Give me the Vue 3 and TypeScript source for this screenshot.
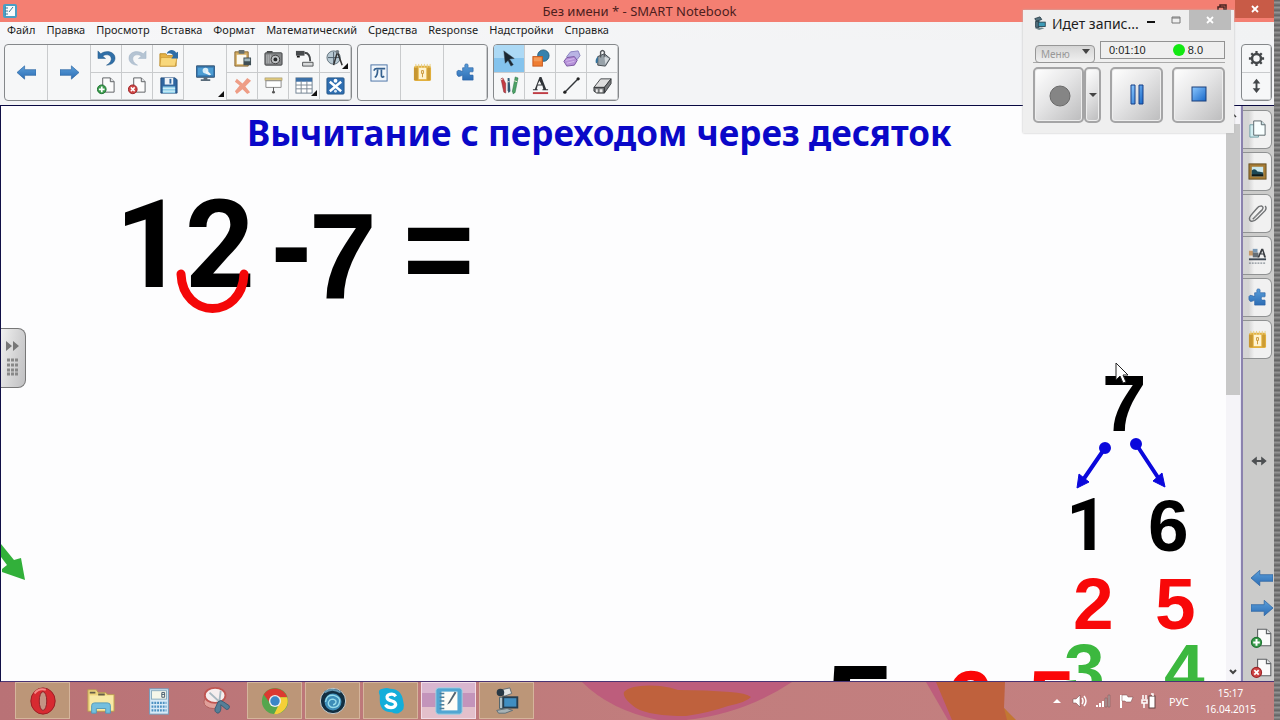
<script setup lang="ts">
interface Tool { name: string; icon: string; more?: boolean; on?: boolean }
interface Mark { text: string; x: number; y: number; size: number; color: string; plain?: boolean }

const doc = '<path d="M6 2h8l4 4v11H6z" fill="#fbfbfb" stroke="#5d6063"/><path d="M14 2v4h4" fill="#e4e8ea" stroke="#5d6063"/>'
const puzzle = '<path d="M1 9q1-2 3-1l3 1V5h2c1-1-1-4 2-4s1 3 2 4h5v4c-1 1-4-1-4 2s3 1 4 2v5H7v-5l-3 1q-2 1-3-2z" fill="url(#blue)" stroke="#2a62a4" stroke-width=".7"/>'
const book = '<rect x="1" y="3" width="18" height="16" rx="2" fill="#e2b03e"/><path d="M3 1v4M6 1v4M9 1v4M12 1v4M15 1v4M18 1v4" stroke="#e8cf83"/><rect x="1" y="5" width="4" height="13" fill="#c79631"/><rect x="15" y="5" width="3" height="13" fill="#cc9c34"/><rect x="6" y="5" width="8" height="12" fill="#fff3cf"/><path d="M9 8h2v3H9zM10 11v4" stroke="#c9973a" fill="none"/>'
const plus = '<circle cx="5" cy="14" r="4.6" fill="#3b9c4d" stroke="#207433"/><path d="M5 11v6M2 14h6" stroke="#fff" stroke-width="1.8"/>'
const cross = '<circle cx="5" cy="14" r="4.6" fill="#cf4645" stroke="#9c2528"/><path d="M3 12l4 4M7 12l-4 4" stroke="#fff" stroke-width="1.6"/>'

const icons: Record<string, string> = {
  left: '<path d="M0 10l8-7v4h12v6H8v4z" fill="url(#blue)" stroke="#2d66a3" stroke-width=".7"/>',
  right: '<path d="M20 10l-8-7v4H0v6h12v4z" fill="url(#blue)" stroke="#2d66a3" stroke-width=".7"/>',
  undo: '<path d="M1 2v8h8L6 7.500c4-3 9.500-1 9 3.500-.5 3-3 5-5 6 5 0 9-3 9-7.500C19 3 10 .500 4 5z" fill="#2f6fa8" stroke="#235681" stroke-width=".5"/>',
  redo: '<path d="M19 2v8h-8l3-2.500c-4-3-9.500-1-9 3.500 .5 3 3 5 5 6-5 0-9-3-9-7.500C1 3 10 .500 16 5z" fill="#b5c4d3" stroke="#9fb2c5" stroke-width=".5"/>',
  open: '<path d="M1 5h6l2 2h9v11H1z" fill="#e6b347" stroke="#bb8a27"/><path d="M2 9h17l-2 9H1z" fill="#f8d77b" stroke="#c89634" stroke-width=".7"/><path d="M8 5c2-5 8-5 10-1l2-1v7h-7l2-3c-2-3-5-3-7-2z" fill="#2e6da6"/>',
  save: '<path d="M2 2h15l2 2v14H2z" fill="#2f66a0" stroke="#234d7d"/><rect x="6" y="2" width="9" height="7" fill="#eef3f8"/><rect x="11" y="3" width="2" height="5" fill="#2f66a0"/><rect x="4" y="11" width="13" height="7" fill="#8fd0ea"/><path d="M4 13h13M4 16h13" stroke="#dff4fb"/>',
  addpage: doc + plus,
  delpage: doc + cross,
  screen: '<rect x="0" y="3" width="20" height="12" rx="1" fill="#3779b1" stroke="#35506c"/><path d="M2 5h16v8H2z" fill="#4d9dd3"/><circle cx="10" cy="8" r="3" fill="#d7edf8"/><path d="M11 7l5 5-2 1-4-2z" fill="#eef4f8"/><path d="M8 15h4v2h3v2H5v-2h3z" fill="#596b7a"/>',
  paste: '<path d="M2 3h14v15H2z" fill="#d4ad62" stroke="#876731"/><path d="M4 6h10v10H4z" fill="#fbf9f0"/><path d="M6 1h6v4H6z" fill="#66706f"/><path d="M11 9h8v8h-8z" fill="#3f4e55"/><path d="M12 10h6v3h-6z" fill="#9fb6bd"/>',
  camera: '<rect x="1" y="4" width="18" height="13" rx="1" fill="#858789" stroke="#3e4042"/><path d="M3 6v9M5 6v9M7 6v9" stroke="#b7b9ba"/><circle cx="12" cy="11" r="4.500" fill="#c1c4c6" stroke="#3c3c3c"/><circle cx="12" cy="11" r="2" fill="#27292a"/><path d="M3 2h6v2H3z" fill="#484a4b"/>',
  doccam: '<rect x="1" y="2" width="9" height="5" fill="#484b4e"/><path d="M2 7h3v2H2z" fill="#111"/><path d="M10 4c4 0 6 3 6 9" fill="none" stroke="#45484b" stroke-width="2"/><path d="M8 14h11v4H8z" fill="#d8dadb" stroke="#525456"/>',
  measure: '<circle cx="8" cy="9" r="7" fill="#b7c8d2" stroke="#64747e"/><path d="M8 3v12M2 9h12" stroke="#4e5e69"/><path d="M12 3l-4 14M12 3l5 14" stroke="#333" stroke-width="1.6"/><circle cx="12" cy="3" r="2" fill="#717b82"/>',
  remove: '<path d="M4 3l6 5 5-6 4 3-6 6 5 6-3 2-5-5-6 5-2-3 5-6-5-4z" fill="#ee9d86"/>',
  shade: '<rect x="1" y="2" width="18" height="3" fill="#ddc77d" stroke="#8d835f" stroke-width=".5"/><path d="M2 5h16v7H2z" fill="#fff" stroke="#888"/><path d="M10 12v5" stroke="#555"/><circle cx="10" cy="17" r="1.500" fill="#555"/>',
  table: '<rect x="1" y="2" width="17" height="16" fill="#fff" stroke="#6f8192"/><rect x="1" y="2" width="17" height="4" fill="#3c70a7"/><path d="M1 9.500h17M1 13.500h17M6.500 5v13M12.500 5v13" stroke="#7b8895"/>',
  exchange: '<rect x="1" y="2" width="18" height="17" rx="1" fill="#2f6eb1" stroke="#265788"/><path d="M4 6l12 10M16 6L4 16" stroke="#fff" stroke-width="2.600"/><circle cx="10" cy="5" r="2" fill="#fff"/><circle cx="10" cy="16" r="1.500" fill="#d5e7f5"/>',
  math: '<rect x="1" y="2" width="17" height="17" fill="#f1f6fb" stroke="#4972a5"/><path d="M4 8q1-2 3-2h9M8 7q0 7-3 8M12 7v6q0 3 3 1" fill="none" stroke="#35618f" stroke-width="1.800"/>',
  book, puzzle,
  select: '<path d="M4 2l11 8-5 .500 4 6-2.500 1.500-3-6-3 3z" fill="#1b2731" stroke="#38434c" stroke-width=".5"/>',
  shapes: '<circle cx="13" cy="7" r="6" fill="#3782ad" stroke="#28617f"/><rect x="2" y="8" width="10" height="10" fill="#ef7d32" stroke="#c65b20"/><path d="M3 9h8v4H3z" fill="#f39b59"/>',
  poly: '<path d="M9 3l8-1 2 5-3 4-8 1-3-4z" fill="#b9b4e4" stroke="#8a82c0"/><path d="M5 9l8-1 3 4-3 5-8 1-3-5z" fill="#b691d9" stroke="#77559f"/><path d="M4 12l9-2M5 15l8-2" stroke="#d4bbec"/>',
  fill: '<path d="M5 8l7-3 6 5-5 8-8-1z" fill="#98a2a9" stroke="#42494e"/><path d="M8 9V3q2-3 4 0v6" fill="none" stroke="#53585c" stroke-width="1.500"/><path d="M12 8l5 2-4 6z" fill="#d5dadd"/><path d="M5 8q-3 3-2 7 3 1 2-7" fill="#35739d"/>',
  pens: '<path d="M1 3l3 14 2 1V8L3 2z" fill="#c53c43" stroke="#7a2730" stroke-width=".5"/><path d="M8 2h2l1 14-2 2-1-3z" fill="#315a74"/><path d="M16 1l3 1-3 15-2 2-1-3z" fill="#4da366" stroke="#246b40" stroke-width=".5"/><path d="M1 4l2-1M8 6h2M15 5l3 1" stroke="#f4e9d9"/>',
  text: '<path d="M9 1h2l5 13h2v1h-6v-1h1l-1-4H7l-1 4h1v1H2v-1h2zM9 5L7 9h4z" fill="#303439" fill-rule="evenodd"/><rect x="2" y="17" width="16" height="2" fill="#bf3d45"/>',
  line: '<path d="M3 17L17 3" stroke="#32363a" stroke-width="1.500"/><circle cx="3" cy="17" r="1.700" fill="#222"/><circle cx="17" cy="3" r="1.700" fill="#222"/>',
  rubber: '<path d="M8 3h11l-7 9H1z" fill="#dedede" stroke="#44484b"/><path d="M1 12h11v6H4l-3-2zM12 12l7-9v5l-7 10z" fill="#77797b" stroke="#393c3e"/><path d="M3 14h2v3H3zM7 14h3v3H7z" fill="#ededed"/>',
  gear: '<circle cx="10" cy="10" r="4.700" fill="none" stroke="#44474a" stroke-width="2.600"/><path d="M10 2v3M10 15v3M2 10h3M15 10h3M4.500 4.500l2 2M13.500 13.500l2 2M15.500 4.500l-2 2M6.500 13.500l-2 2" stroke="#44474a" stroke-width="2.400"/>',
  updown: '<path d="M10 3l4 5h-3v5h3l-4 5-4-5h3V8H6z" fill="#44474a"/>',
  wide: '<path d="M3 10l5-4v3h4V6l5 4-5 4v-3H8v3z" fill="#4d5052"/>',
  pages: '<path d="M2 5h9v13H2z" fill="#d1edf0" stroke="#6f9ca3"/><path d="M6 1h8l4 4v11H6z" fill="#f8ffff" stroke="#59666a"/><path d="M14 1v4h4" fill="#cce3e7" stroke="#59666a"/>',
  gallery: '<rect x="1" y="2" width="18" height="16" fill="#a67b34" stroke="#675023"/><path d="M4 5h12v10H4z" fill="#cbe8ee"/><path d="M4 9q3-3 6 1 2 0 6 1v4H4z" fill="#1d4855"/><path d="M4 14h12" stroke="#121a18" stroke-width="2"/>',
  clip: '<path d="M5 16L15 6q2-3-1-4-3 0-5 3l-6 7q-3 4 0 6 3 1 7-3l8-8q2-3 0-5" fill="none" stroke="#707274" stroke-width="1.500"/><path d="M7 14l7-8" stroke="#909294"/>',
  props: '<rect x="1" y="5" width="5" height="5" fill="#c69a6b"/><rect x="5" y="3" width="5" height="4" fill="#7797b4"/><rect x="5" y="7" width="6" height="5" fill="#656e75"/><path d="M10 12L14 3h2l3 9h-2l-1-3h-3l-1 3zM15 5l-1 3h2z" fill="#393d42" fill-rule="evenodd"/><path d="M1 14h18" stroke="#3c4753" stroke-width="2"/><path d="M1 18h18" stroke="#66717a" stroke-dasharray="2 1"/>'
}

const menus = ['Файл', 'Правка', 'Просмотр', 'Вставка', 'Формат', 'Математический', 'Средства', 'Response', 'Надстройки', 'Справка']
const nav: Tool[] = [{ name: 'Назад', icon: 'left' }, { name: 'Вперед', icon: 'right' }]
const fileTools: Tool[] = [
  { name: 'Отменить', icon: 'undo' }, { name: 'Повторить', icon: 'redo' }, { name: 'Открыть', icon: 'open' },
  { name: 'Добавить страницу', icon: 'addpage' }, { name: 'Удалить страницу', icon: 'delpage' }, { name: 'Сохранить', icon: 'save' }
]
const insertTools: Tool[] = [
  { name: 'Вставить', icon: 'paste' }, { name: 'Захват экрана', icon: 'camera' }, { name: 'Документ-камера', icon: 'doccam' }, { name: 'Измерения', icon: 'measure', more: true },
  { name: 'Удалить', icon: 'remove' }, { name: 'Затенение экрана', icon: 'shade' }, { name: 'Таблица', icon: 'table', more: true }, { name: 'SMART Exchange', icon: 'exchange' }
]
const addons: Tool[] = [{ name: 'Математика', icon: 'math' }, { name: 'Галерея занятий', icon: 'book' }, { name: 'Дополнения', icon: 'puzzle' }]
const drawTools: Tool[] = [
  { name: 'Выбрать', icon: 'select', on: true }, { name: 'Фигуры', icon: 'shapes' }, { name: 'Многоугольники', icon: 'poly' }, { name: 'Заливка', icon: 'fill' },
  { name: 'Перья', icon: 'pens' }, { name: 'Текст', icon: 'text' }, { name: 'Линии', icon: 'line' }, { name: 'Ластик', icon: 'rubber' }
]
const tabs: Tool[] = [
  { name: 'Страницы', icon: 'pages' }, { name: 'Галерея', icon: 'gallery' }, { name: 'Вложения', icon: 'clip' },
  { name: 'Свойства', icon: 'props' }, { name: 'Надстройки', icon: 'puzzle' }, { name: 'Занятия', icon: 'book' }
]
const pageTools: Tool[] = [
  { name: 'Предыдущая страница', icon: 'left' }, { name: 'Следующая страница', icon: 'right' },
  { name: 'Новая страница', icon: 'addpage' }, { name: 'Убрать страницу', icon: 'delpage' }
]

const marks: Mark[] = [
  { text: '12', x: 114, y: 79, size: 122, color: '#000', plain: true },
  { text: '-', x: 270, y: 78, size: 122, color: '#000' },
  { text: '7', x: 308, y: 90, size: 122, color: '#000' },
  { text: '=', x: 402, y: 82, size: 122, color: '#000' },
  { text: '7', x: 1101, y: 258, size: 80, color: '#000' },
  { text: '1', x: 1065, y: 383, size: 73, color: '#000', plain: true },
  { text: '6', x: 1147, y: 383, size: 73, color: '#000' },
  { text: '2', x: 1072, y: 461, size: 73, color: '#f80809' },
  { text: '5', x: 1154, y: 461, size: 73, color: '#f80809' },
  { text: '3', x: 1063, y: 527, size: 73, color: '#3cb83f' },
  { text: '4', x: 1163, y: 527, size: 73, color: '#3cb83f' },
  { text: '5', x: 824, y: 541, size: 126, color: '#000' },
  { text: '6', x: 945, y: 552, size: 85, color: '#fb0607' },
  { text: '5', x: 1027, y: 552, size: 85, color: '#fb0607' }
]

const apps = [
  { name: 'Opera', open: true, art: '<ellipse cx="16" cy="16" rx="13" ry="14" fill="#d72a31" stroke="#971b23"/><ellipse cx="16" cy="16" rx="4" ry="10" fill="#c39484" stroke="#8e2026"/><path d="M7 8q4-6 12-4" stroke="#f48b88" fill="none" stroke-width="2"/>' },
  { name: 'Проводник', open: false, art: '<path d="M2 4h9l2 3h8l2 2h7v18H2z" fill="#eed47c" stroke="#b99b55"/><path d="M4 10h25v16H4z" fill="#f8e9a6"/><path d="M4 7h6M13 9h7" stroke="#665d48" stroke-width="2"/><path d="M6 29V21q0-3 3-3h14q3 0 3 3v8h-5v-5H11v5z" fill="#74bfdf" stroke="#5299ba"/>' },
  { name: 'Калькулятор', open: false, art: '<rect x="6" y="3" width="20" height="27" fill="#d8eaf7" stroke="#6e9cbd"/><rect x="8" y="5" width="16" height="9" fill="#f6f7ea" stroke="#87a9bd"/><path d="M19 7h3v5h-3zM19 9h3" stroke="#42596c" fill="none"/><path d="M8 18h16M8 22h16M8 26h16" stroke="#4c90c1" stroke-width="2.500" stroke-dasharray="2 1"/>' },
  { name: 'Ножницы', open: false, art: '<ellipse cx="12" cy="17" rx="10" ry="7" fill="#e0a09a" stroke="#b05f5c"/><ellipse cx="14" cy="10" rx="11" ry="8" fill="#f5eeee" stroke="#bf5652" stroke-width="2"/><path d="M8 7l14 13M20 5l-2 15" stroke="#a8b8c0" stroke-width="2"/><path d="M17 17q3-3 6 0l6 4q1 4-3 4l-6-5q1 8-3 9-4-1-3-5z" fill="#557e97" stroke="#355c74"/>' },
  { name: 'Chrome', open: true, art: '<circle cx="16" cy="16" r="14" fill="#56a64d"/><path d="M4 9a14 14 0 0 1 25 3H16l-4 8z" fill="#dc3931"/><path d="M29 12A14 14 0 0 1 15 30l7-14-5-4z" fill="#f4cf38"/><circle cx="16" cy="16" r="6.500" fill="#eee"/><circle cx="16" cy="16" r="5" fill="#3b86c6"/>' },
  { name: 'Медиаплеер', open: true, art: '<circle cx="16" cy="16" r="13.500" fill="#122f42" stroke="#d1d8d8"/><circle cx="16" cy="17" r="9" fill="#3d8db8"/><path d="M8 17q1-8 9-7 7 2 6 7-1 6-7 6-5-1-5-5 1-4 5-4 4 1 3 4-1 2-3 2" stroke="#97dcea" fill="none" stroke-width="1.500"/><path d="M7 7q8-6 17 0" stroke="#6295af" fill="none" stroke-width="2"/>' },
  { name: 'Skype', open: true, art: '<path d="M4 10Q1 4 7 3q5-2 8 0 12 0 14 13 3 10-5 13-4 1-7-1Q4 28 4 15z" fill="#13aeda"/><path d="M21 11q-2-3-6-2-4 1-3 4 1 2 5 3 4 1 4 4-1 3-5 3t-6-3" fill="none" stroke="#fff" stroke-width="3.500"/>' },
  { name: 'SMART Notebook', open: true, art: '<rect x="2" y="2" width="28" height="28" rx="3" fill="#52a6d2" stroke="#a2d1e2"/><rect x="8" y="6" width="17" height="20" fill="#fffdf7"/><path d="M6 8h5M6 12h5M6 16h5M6 20h5M6 24h5" stroke="#4f7f9a" stroke-width="1.500"/><path d="M15 18L22 6l2 1-7 11-3 2z" fill="#526471"/>' },
  { name: 'Запись', open: true, art: '<path d="M10 4l9-2 2 6-8 3z" fill="#e1e4e4" stroke="#606b70"/><circle cx="9" cy="7" r="4" fill="#273845"/><path d="M8 12h4v12H8z" fill="#b1c1c8" stroke="#4e626b"/><rect x="12" y="12" width="15" height="11" fill="#408ec1" stroke="#263d4e" stroke-width="2"/><path d="M5 26l11-2 6 2-8 3H7z" fill="#a7b2b5" stroke="#5d6e76"/>' }
]
</script>

<template>
  <div class="desktop">
    <main class="window">
      <header class="titlebar">
        <svg class="appicon" viewBox="0 0 16 16"><rect x="1" y="1" width="14" height="14" rx="2" fill="#4a9fc4"/><rect x="4" y="3" width="9" height="10" fill="#f7fbfc"/><path d="M3 5h3M3 8h3M3 11h3M7 9l4-5" stroke="#3d7995"/></svg>
        <span class="caption">Без имени * - SMART Notebook</span>
        <button class="restore" aria-label="Развернуть"><svg viewBox="0 0 10 10"><path d="M3 3V1h6v5H7M1 3h6v5H1z" fill="none" stroke="#482421" stroke-width="1.500"/></svg></button>
        <button class="close" aria-label="Закрыть"><svg viewBox="0 0 10 10"><path d="M2 2l6 6M8 2L2 8" stroke="#fff" stroke-width="1.800"/></svg></button>
      </header>
      <nav class="menubar"><button v-for="m in menus" :key="m">{{ m }}</button></nav>

      <div class="toolbar">
        <div class="group">
          <button v-for="t in nav" :key="t.name" class="tool big" :aria-label="t.name"><svg viewBox="0 0 20 20" v-html="icons[t.icon]" /></button>
          <div class="cells three"><button v-for="t in fileTools" :key="t.name" class="tool" :aria-label="t.name"><svg viewBox="0 0 20 20" v-html="icons[t.icon]" /></button></div>
          <button class="tool big more" aria-label="Просмотр экранов"><svg viewBox="0 0 20 20" v-html="icons.screen" /></button>
          <div class="cells four"><button v-for="t in insertTools" :key="t.name" class="tool" :class="{ more: t.more }" :aria-label="t.name"><svg viewBox="0 0 20 20" v-html="icons[t.icon]" /></button></div>
        </div>
        <div class="group">
          <button v-for="t in addons" :key="t.name" class="tool big" :aria-label="t.name"><svg viewBox="0 0 20 20" v-html="icons[t.icon]" /></button>
        </div>
        <div class="group">
          <div class="cells four"><button v-for="t in drawTools" :key="t.name" class="tool" :class="{ on: t.on }" :aria-label="t.name"><svg viewBox="0 0 20 20" v-html="icons[t.icon]" /></button></div>
        </div>
        <div class="group last">
          <div class="cells one">
            <button class="tool" aria-label="Настройка"><svg viewBox="0 0 20 20" v-html="icons.gear" /></button>
            <button class="tool" aria-label="Переместить панель"><svg viewBox="0 0 20 20" v-html="icons.updown" /></button>
          </div>
        </div>
      </div>

      <div class="work">
        <section class="stage">
          <h1>Вычитание с переходом через десяток</h1>
          <span v-for="(m, i) in marks" :key="i" class="mark" :class="{ plain: m.plain }" :style="{ left: m.x + 'px', top: m.y + 'px', fontSize: m.size + 'px', color: m.color }">{{ m.text }}</span>
          <svg class="ink">
            <defs>
              <linearGradient id="blue" x1="0" y1="0" x2="0" y2="1"><stop offset="0" stop-color="#5b9fda"/><stop offset="1" stop-color="#2c6db5"/></linearGradient>
              <linearGradient id="glass" x1="0" y1="0" x2="1" y2="1"><stop offset="0" stop-color="#8cc8ff"/><stop offset="1" stop-color="#1767c8"/></linearGradient>
            </defs>
            <path d="M180 168C182 214 241 214 243 168" fill="none" stroke="#f40708" stroke-width="9" stroke-linecap="round"/>
            <g stroke="#0b08dc" stroke-width="4" fill="#0b08dc">
              <path d="M1104 342l-22 32M1135 338l23 35"/>
              <circle cx="1104" cy="342" r="4"/><circle cx="1135" cy="338" r="4"/>
              <path d="M1076 382l2-14 10 8zM1164 381l-12-6 9-8z" stroke-width="1"/>
            </g>
            <path d="M0 438l13 16 7-2 4 22-23-8v-3l5-4-6-8z" fill="#32b03a"/>
            <path d="M1115 257v17l4-4 3 7 3-1-3-7h5z" fill="#fff" stroke="#222"/>
          </svg>
          <button class="drawer" aria-label="Показать панель">
            <svg viewBox="0 0 16 40"><path d="M1 3l6 5-6 5zM8 3l6 5-6 5z" fill="#777"/><path d="M2 22h11M2 27h11M2 32h11M2 36h11" stroke="#888" stroke-width="3" stroke-dasharray="3 1"/></svg>
          </button>
        </section>
        <div class="scroll">
          <button aria-label="Вверх"><svg viewBox="0 0 8 8"><path d="M1 6l3-3 3 3" fill="none" stroke="#333" stroke-width="1.500"/></svg></button>
          <div class="thumb"></div>
          <button class="down" aria-label="Вниз"><svg viewBox="0 0 8 8"><path d="M1 2l3 3 3-3" fill="none" stroke="#444" stroke-width="2"/></svg></button>
        </div>
        <aside class="rail">
          <button v-for="t in tabs" :key="t.name" class="tab" :aria-label="t.name"><svg viewBox="0 0 20 20" v-html="icons[t.icon]" /></button>
          <button class="plain grip" aria-label="Ширина панели"><svg viewBox="0 0 20 20" v-html="icons.wide" /></button>
          <div class="pager"><button v-for="t in pageTools" :key="t.name" class="plain" :aria-label="t.name"><svg viewBox="0 0 20 20" v-html="icons[t.icon]" /></button></div>
        </aside>
      </div>

      <footer class="taskbar">
        <svg class="wall" viewBox="0 0 460 38">
          <path d="M22 0H232Q184 32 126 38H98Q50 28 22 0z" fill="#bd5d7c"/>
          <path d="M64 10Q72 2 100 4q10 1 18 4 28 0 52 2 16 1 21 5-4 5-23 9-20 7-42 10-36 0-50-8-14-10-12-16z" fill="#bf613d"/>
          <path d="M366 0h12l16 38h-6z" fill="#bd5d7c"/><path d="M376 0h69l-1 26 10 12h-62z" fill="#bf613d"/><path d="M444 26l12 12h-9z" fill="#c27732"/>
        </svg>
        <button v-for="a in apps" :key="a.name" class="app" :class="{ open: a.open, active: a.name === 'SMART Notebook' }" :aria-label="a.name"><svg viewBox="0 0 32 32" v-html="a.art" /></button>
        <div class="tray">
          <button aria-label="Скрытые значки"><svg viewBox="0 0 16 16"><path d="M4 10l4-4 4 4z" fill="#fff"/></svg></button>
          <button aria-label="Громкость"><svg viewBox="0 0 16 16"><path d="M1 6h3l4-4v12l-4-4H1z" fill="#fff" stroke="#6e4545" stroke-width=".5"/><path d="M10 5q2 3 0 6M12 3q4 5 0 10" fill="none" stroke="#fff" stroke-width="1.500"/></svg></button>
          <button aria-label="Сеть"><svg viewBox="0 0 16 16"><path d="M1 12h2v2H1zM4 10h2v4H4zM7 8h2v6H7z" fill="#fff"/><path d="M10 5h2v9h-2zM13 2h2v12h-2z" fill="#b39999" stroke="#765b5b" stroke-width=".5"/></svg></button>
          <button aria-label="Центр поддержки"><svg viewBox="0 0 16 16"><path d="M3 2v13" stroke="#fff" stroke-width="2"/><path d="M4 2h5l1 2h5l-2 5H8L7 8H4z" fill="#fff" stroke="#774a4a" stroke-width=".5"/></svg></button>
          <button aria-label="Питание"><svg viewBox="0 0 16 16"><rect x="8" y="3" width="6" height="12" fill="#fff" stroke="#604141"/><path d="M10 1h2v2M2 2v4M5 2v4M1 7h5v3H1zM3 10v5" fill="none" stroke="#fff" stroke-width="1.500"/></svg></button>
          <button class="lang">РУС</button>
          <button class="clock"><span>15:17</span><span>16.04.2015</span></button>
        </div>
      </footer>
    </main>
    <div class="edge"></div>

    <section class="recorder">
      <header>
        <svg class="cam" viewBox="0 0 16 16"><path d="M2 3l6-2 2 3-6 2zM3 6h4v7H3z" fill="#55727f" stroke="#263d48"/><rect x="6" y="7" width="8" height="5" fill="#3d9bb7" stroke="#28434f"/><path d="M2 14l8-1 3 1-6 2z" fill="#71868c"/></svg>
        <h2>Идет запис...</h2>
        <button class="min" aria-label="Свернуть"><svg viewBox="0 0 10 10"><path d="M1 7h8" stroke="#111" stroke-width="2"/></svg></button>
        <button class="max" aria-label="Развернуть окно записи"><svg viewBox="0 0 10 10"><path d="M1 2h8v6H1zM1 3h8" fill="none" stroke="#777"/></svg></button>
        <button class="shut" aria-label="Закрыть запись"><svg viewBox="0 0 10 10"><path d="M2 2l6 6M8 2L2 8" stroke="#fff" stroke-width="1.800"/></svg></button>
      </header>
      <div class="status">
        <div class="pick"><select aria-label="Меню" disabled><option>Меню</option></select><svg viewBox="0 0 8 5"><path d="M0 0h8L4 5z" fill="#444"/></svg></div>
        <output><span>0:01:10</span><i></i><span>8.0</span></output>
      </div>
      <div class="controls">
        <div class="pair">
          <button class="rec" aria-label="Запись" disabled><svg viewBox="0 0 24 24"><circle cx="13" cy="13" r="10" fill="#858585" stroke="#6a6a6a"/></svg></button>
          <button class="drop" aria-label="Параметры записи"><svg viewBox="0 0 8 5"><path d="M0 0h8L4 4z" fill="#444"/></svg></button>
        </div>
        <button aria-label="Пауза"><svg viewBox="0 0 24 24"><path d="M6 2h4v19H6zM14 2h4v19h-4z" fill="url(#glass)" stroke="#173f86"/></svg></button>
        <button aria-label="Стоп"><svg viewBox="0 0 24 24"><rect x="5" y="4" width="14" height="14" fill="url(#glass)" stroke="#1a3f7a"/></svg></button>
      </div>
    </section>
  </div>
</template>

<style>
body { margin: 0; overflow: hidden; }
</style>

<style scoped>
* { box-sizing: border-box; }
button { font: inherit; color: inherit; background: none; border: 0; padding: 0; margin: 0; display: flex; align-items: center; justify-content: center; }
svg { display: block; flex: none; }
.desktop { position: relative; display: flex; height: 100vh; font-family: "Noto Sans", "Open Sans", sans-serif; color: #1d1d1d; }
.window { flex: 1; min-width: 0; display: flex; flex-direction: column; background: #f4f5f6; }
.edge { width: 6px; background: repeating-linear-gradient(#666 0 1px, #929292 2px 3px, #707070 4px 5px); }

.titlebar { display: flex; align-items: center; height: 22px; flex: none; background: #f47f72; }
.appicon { width: 16px; height: 16px; margin-left: 2px; }
.caption { flex: 1; padding-left: 52px; text-align: center; font-size: 13px; line-height: 20px; color: #4d201d; }
.restore { width: 26px; height: 18px; align-self: flex-start; }
.restore svg, .close svg { width: 10px; height: 10px; }
.close { width: 39px; height: 18px; align-self: flex-start; background: #c85b47; }
.menubar { display: flex; gap: 11px; height: 18px; flex: none; padding: 0 0 2px 7px; font-size: 11px; line-height: 16px; background: linear-gradient(90deg, #f7f7f9, #f1f2f3); }

.toolbar { display: flex; gap: 5px; height: 65px; flex: none; padding: 4px 2px 4px 4px; background: #f3f4f6; }
.group { display: flex; height: 57px; border: 1px solid #85888b; border-radius: 4px; overflow: hidden; background: #f6f7f8; }
.group.last { margin-left: auto; }
.cells { display: grid; grid-template-rows: 1fr 1fr; }
.three { grid-template-columns: repeat(3, 31px); }
.four { grid-template-columns: repeat(4, 31px); }
.one { grid-template-columns: 29px; }
.tool { position: relative; border-right: 1px solid #c9cbcd; }
.tool svg { width: 19px; height: 19px; }
.big { width: 43px; }
.cells .tool { border-bottom: 1px solid #c9cbcd; }
.on { background: linear-gradient(#acd9f5 50%, #84c3ed 50%); }
.more::after { content: ""; position: absolute; right: 2px; bottom: 3px; border: 3px solid #111; border-left-color: transparent; border-top-color: transparent; }

.work { flex: 1; min-height: 0; display: flex; border-top: 1px solid #090942; border-bottom: 1px solid #4a3473; border-left: 1px solid #111047; }
.stage { flex: 1; min-width: 0; position: relative; overflow: hidden; background: #fdfdfe; }
.stage h1 { position: absolute; left: 246px; top: 0; margin: 0; font: bold 35px/53px "Comic Sans MS", "Noto Sans", sans-serif; color: #0a08c8; white-space: nowrap; }
.mark { position: absolute; font-family: "Liberation Sans", Arial, sans-serif; font-weight: bold; line-height: 1; }
.mark.plain { width: auto; height: auto; font-family: Roboto, Arial, sans-serif; }
.ink { position: absolute; left: 0; top: 0; width: 100%; height: 100%; }
.drawer { position: absolute; left: 0; top: 222px; width: 25px; height: 60px; border: 1px solid #777; border-left: 0; border-radius: 0 8px 8px 0; background: linear-gradient(100deg, #f0f0f0, #d2d2d3 60%, #c0c0c2); }
.drawer svg { width: 16px; height: 40px; }
.scroll { width: 15px; display: flex; flex-direction: column; background: #f5f4f8; border-right: 1px solid #e4e4f2; }
.scroll button { height: 18px; flex: none; }
.scroll svg { width: 8px; height: 8px; }
.scroll .thumb { height: 271px; background: #c8c8c8; }
.scroll .down { margin-top: auto; }
.rail { width: 33px; display: flex; flex-direction: column; gap: 3px; padding-top: 4px; border-left: 2px solid #8b82ae; background: #cbcbca; }
.tab { width: 29px; height: 39px; flex: none; border: 1px solid #909293; border-left: 0; border-radius: 0 6px 6px 0; background: linear-gradient(90deg, #d5d5d5 20%, #f1f1f1 40%); }
.tab svg { width: 19px; height: 19px; }
.plain { width: 31px; height: 30px; flex: none; }
.plain svg { width: 22px; height: 22px; }
.grip { margin: auto 0; }
.pager { display: grid; justify-content: end; margin-bottom: -2px; }
.pager .plain { width: 24px; }

.taskbar { position: relative; display: flex; gap: 3px; height: 38px; flex: none; padding-left: 15px; background: linear-gradient(90deg, #b97276, #c17d7d 50%, #c48181); }
.wall { position: absolute; left: 560px; top: 0; width: 460px; height: 38px; }
.app { width: 55px; height: 37px; border: 1px solid transparent; }
.app svg { width: 30px; height: 30px; }
.open { background: #bc9678; border-color: #d5b59c; }
.active { background: linear-gradient(#d9b6cf 30%, #c394bb 30% 70%, #e3c0cb 70%); border-color: #f2dde7; }
.tray { position: relative; margin-left: auto; display: flex; align-items: center; gap: 7px; padding-right: 18px; color: #fff; font-size: 11px; }
.tray svg { width: 16px; height: 16px; }
.lang { margin: 0 9px 0 5px; }
.clock { flex-direction: column; line-height: 16px; font-size: 10px; }

.recorder { position: absolute; right: 46px; top: 10px; width: 211px; height: 123px; background: #efefef; box-shadow: 0 0 2px #bbb; padding: 0 9px 0 10px; }
.recorder header { display: flex; height: 31px; align-items: flex-start; margin-right: -3px; }
.cam { width: 14px; height: 14px; margin-top: 6px; }
.recorder h2 { flex: 1; margin: 0 0 0 5px; font-size: 14px; line-height: 27px; font-weight: normal; white-space: nowrap; }
.recorder header button { width: 25px; height: 20px; flex: none; }
.recorder header svg { width: 10px; height: 10px; }
.recorder header .cam { width: 14px; height: 14px; }
.recorder header .shut { width: 42px; background: #bcbcbc; }
.status { display: flex; gap: 5px; height: 22px; padding: 0 0 3px 2px; border-bottom: 1px solid #aaa; }
.pick { position: relative; width: 60px; }
.pick select { width: 100%; height: 18px; appearance: none; border: 1px solid #969696; border-radius: 4px; padding: 0 5px; background: linear-gradient(#d5d5d5, #f0f0f0); color: #999; opacity: 1; font: 10px "Noto Sans", sans-serif; }
.pick svg { position: absolute; right: 5px; top: 8px; width: 8px; height: 5px; }
.status output { flex: 1; display: flex; align-items: center; border: 1px solid #929292; padding-left: 8px; font: 11px "Liberation Sans", Arial, sans-serif; gap: 3px; }
.status i { width: 12px; height: 12px; border-radius: 6px; background: #12e812; margin-left: 24px; }
.controls { display: flex; justify-content: space-between; height: 56px; margin-top: 4px; }
.controls button { width: 53px; height: 56px; border: 2px solid #a5a5a6; border-radius: 5px; background: linear-gradient(135deg, #fff, #e5e5e6 45%, #bcbcbd); box-shadow: inset 0 0 0 1px #eee; }
.controls button svg { width: 24px; height: 24px; }
.pair { display: flex; }
.pair .rec { width: 51px; }
.controls .drop { width: 17px; }
.controls .drop svg { width: 8px; height: 5px; }
</style>
